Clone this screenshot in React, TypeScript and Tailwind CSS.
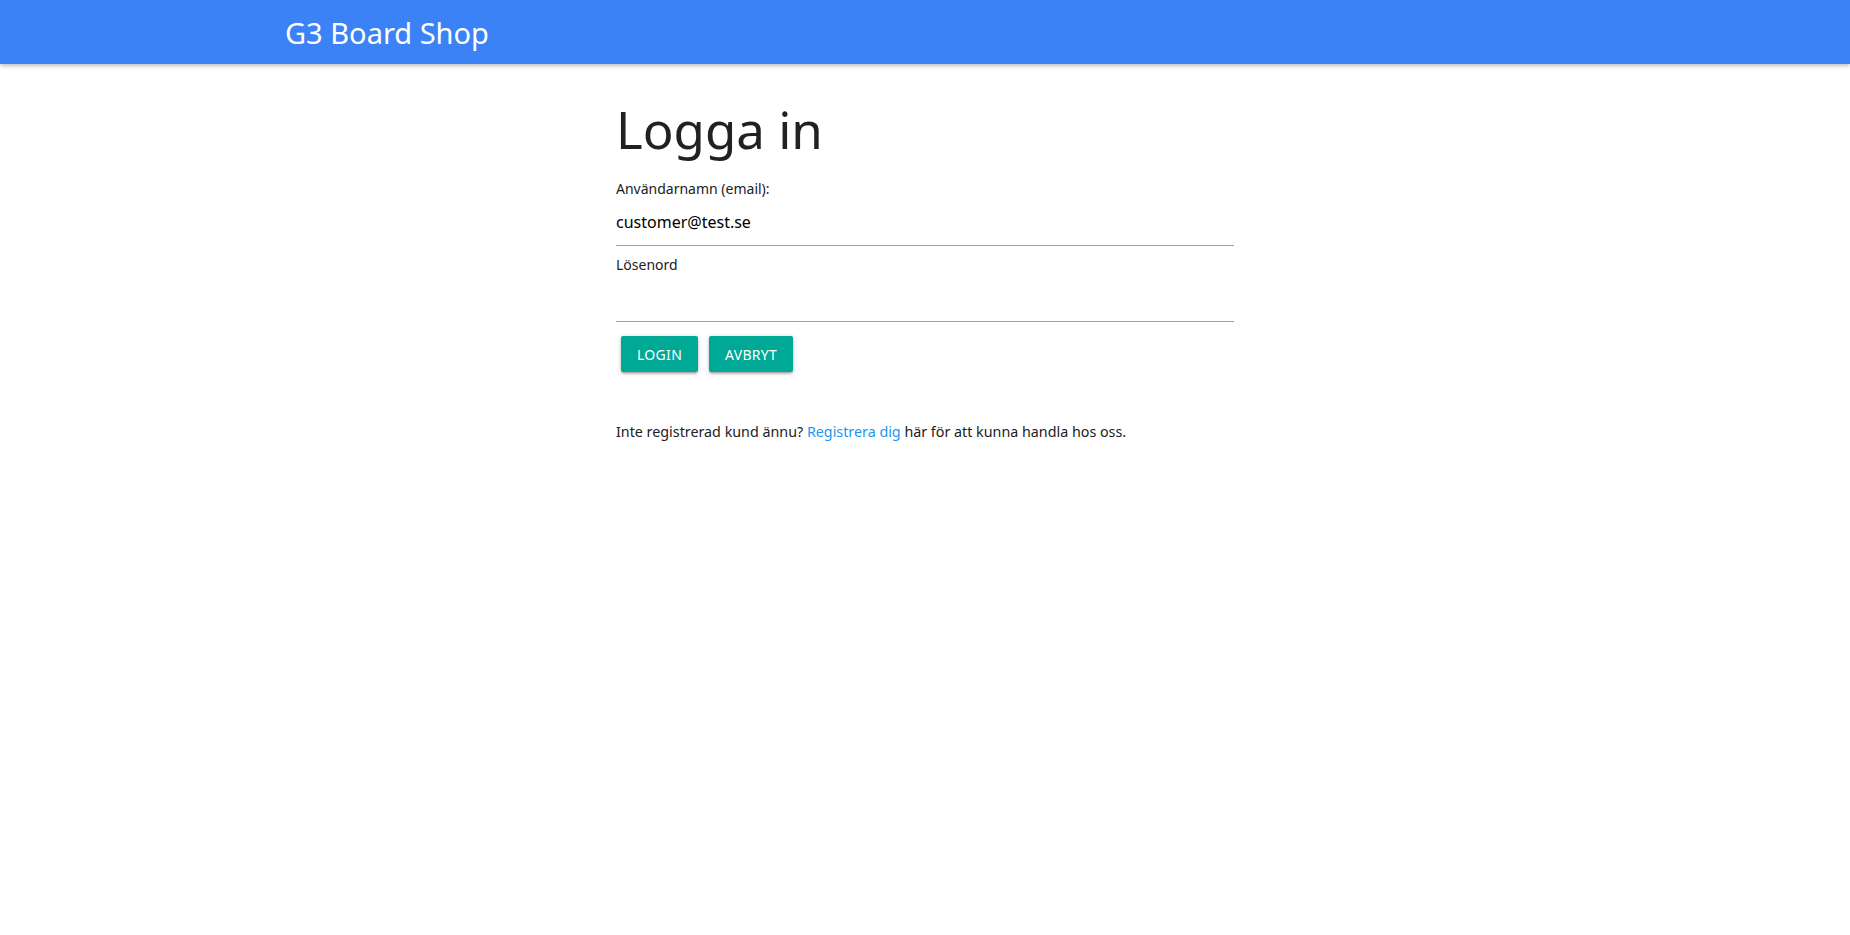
export default function App() {
  return (
    <div className="min-h-screen bg-white font-['Noto_Sans',sans-serif] text-[#212121]">
      <nav className="h-16 bg-[#3b82f6] shadow-[0_2px_4px_rgba(0,0,0,0.25)]">
        <div className="pl-[285px] h-full flex items-center">
          <a href="#" className="text-white text-[29px] leading-none">G3 Board Shop</a>
        </div>
      </nav>

      <div className="w-[618px] mx-auto">
        <h1 className="text-[51px] leading-none mt-[40px] mb-[24px]">Logga in</h1>

        <form className="flex flex-col">
          <label className="text-[14px] leading-5">Användarnamn (email):</label>
          <input
            type="email"
            defaultValue="customer@test.se"
            className="h-12 w-full border-b border-[#9e9e9e] text-[16px] text-black outline-none -mt-[1px]"
          />
          <label className="text-[14px] leading-5 mt-[9px]">Lösenord</label>
          <input
            type="password"
            className="h-12 w-full border-b border-[#9e9e9e] text-[16px] outline-none -mt-[1px]"
          />

          <div className="flex gap-[11px] pl-[5px] mt-[14px]">
            <button
              type="button"
              className="h-9 px-4 rounded-[2px] bg-[#00a896] text-white text-[14px] tracking-[0.3px] uppercase shadow-[0_2px_2px_rgba(0,0,0,0.14),0_3px_1px_-2px_rgba(0,0,0,0.12),0_1px_5px_rgba(0,0,0,0.2)]"
            >
              Login
            </button>
            <button
              type="button"
              className="h-9 px-4 rounded-[2px] bg-[#00a896] text-white text-[14px] tracking-[0.3px] uppercase shadow-[0_2px_2px_rgba(0,0,0,0.14),0_3px_1px_-2px_rgba(0,0,0,0.12),0_1px_5px_rgba(0,0,0,0.2)]"
            >
              Avbryt
            </button>
          </div>
        </form>

        <p className="text-[14.3px] mt-[49px]">
          Inte registrerad kund ännu?{" "}
          <a href="#" className="text-[#2196f3]">Registrera dig</a> här för att kunna handla hos oss.
        </p>
      </div>
    </div>
  );
}
